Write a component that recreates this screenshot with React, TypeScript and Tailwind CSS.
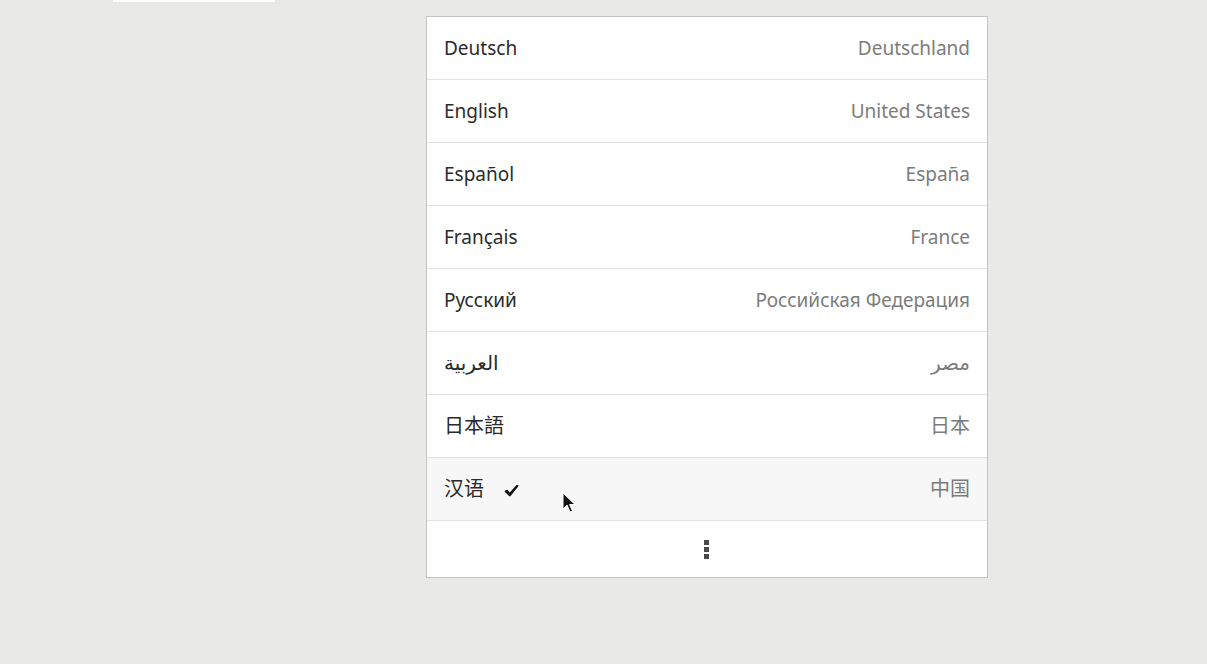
import React from "react";

interface Lang {
    name: string;
    region: string;
    cjk?: boolean;
    selected?: boolean;
}

const languages: Lang[] = [
    { name: "Deutsch", region: "Deutschland" },
    { name: "English", region: "United States" },
    { name: "Español", region: "España" },
    { name: "Français", region: "France" },
    { name: "Русский", region: "Российская Федерация" },
    { name: "العربية", region: "مصر", cjk: true },
    { name: "日本語", region: "日本", cjk: true },
    { name: "汉语", region: "中国", cjk: true, selected: true },
];

const font = { fontFamily: '"Noto Sans", "DejaVu Sans", "Noto Sans CJK SC", sans-serif' };

export default function App() {
    return (
        <div className="relative w-[1207px] h-[664px] bg-[#e9e9e8] overflow-hidden" style={font}>
            <div className="absolute left-[113px] top-0 w-[162px] h-[2px] bg-white" />

            <div className="flex pt-4 pl-[426px]">
                <div className="w-[562px] bg-white border border-[#c4c4c4] flex flex-col">
                    {languages.map((lang) => (
                        <div
                            key={lang.name}
                            className={`h-[63px] flex items-center justify-between border-b border-[#e2e2e2] pl-[17px] pr-[17px] ${lang.selected ? "bg-[#f7f7f7]" : ""}`}
                        >
                            <div className="flex items-center gap-[20px]">
                                <span className={`${lang.cjk ? "text-[20px]" : "text-[19px]"} text-[#2b2b2b]`}>{lang.name}</span>
                                {lang.selected && (
                                    <svg width="15" height="13" viewBox="0 0 15 13" className="mt-[2px]">
                                        <path d="M0.5 7.5 Q1.5 5.5 3.5 5.8 L5.8 8.6 L12.5 1 Q14 0.6 14.8 1.8 L6.6 12 Q5.6 12.8 4.8 11.8 Z" fill="#111" />
                                    </svg>
                                )}
                            </div>
                            <span className={`${lang.cjk ? "text-[20px]" : "text-[19px]"} text-[#7c7c7c]`}>{lang.region}</span>
                        </div>
                    ))}
                    <div className="h-[56px] flex items-center justify-center">
                        <div className="flex flex-col gap-[2px] ml-[-2px]">
                            <div className="w-[5px] h-[5px] bg-[#4a4a4a]" />
                            <div className="w-[5px] h-[5px] bg-[#4a4a4a]" />
                            <div className="w-[5px] h-[5px] bg-[#4a4a4a]" />
                        </div>
                    </div>
                </div>
            </div>

            <svg className="absolute left-[562px] top-[492px]" width="14" height="22" viewBox="0 0 14 22">
                <path d="M1 1 L1 17 L5 13 L8 20 L10.5 19 L7.5 12.5 L13 12.5 Z" fill="#111" stroke="#fff" strokeWidth="1" />
            </svg>
        </div>
    );
}
